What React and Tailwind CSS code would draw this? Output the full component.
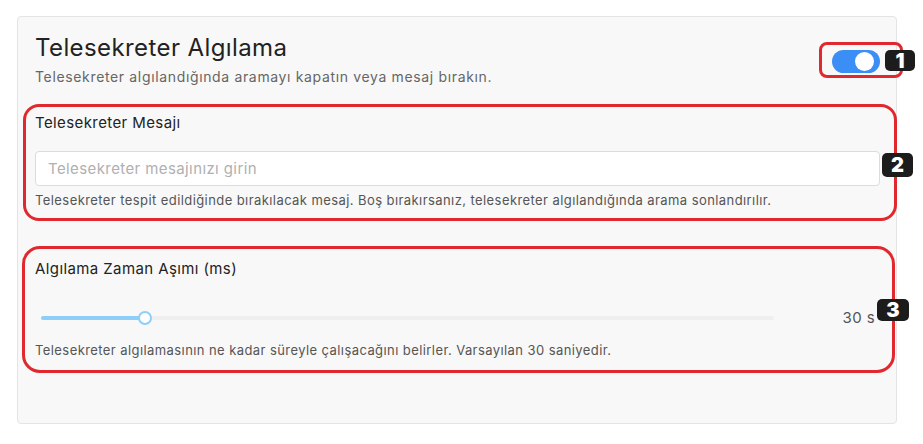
const font = { fontFamily: 'Inter, "Noto Sans", sans-serif' };

function Badge({ n, className }) {
  return (
    <div className={`absolute flex items-center justify-center rounded-[5px] bg-[#1c1c1c] text-white font-black text-[20px] leading-none ${className}`}>
      {n}
    </div>
  );
}

export default function App() {
  return (
    <div className="relative w-[923px] h-[444px] bg-white overflow-hidden pt-[16px] pl-[17px]" style={font}>
      <div className="w-[880px] h-[408px] rounded-[4px] border border-[#e4e4e4] bg-[#f8f8f8] pl-[17px] pr-[16px] pt-[16px]">
        {/* header */}
        <div className="flex items-start justify-between">
          <div>
            <h2 className="text-[24px] leading-[30px] tracking-[0.4px] text-[#222] font-normal">Telesekreter Algılama</h2>
            <p className="mt-[4px] text-[14px] leading-[20px] tracking-[0.65px] text-[#666]">
              Telesekreter algılandığında aramayı kapatın veya mesaj bırakın.
            </p>
          </div>
          <div className="mt-[17px] w-[48px] h-[23px] rounded-full bg-[#3a8ef6] flex items-center justify-end pr-[6px]">
            <div className="w-[19px] h-[19px] rounded-full bg-white"></div>
          </div>
        </div>

        {/* message */}
        <div className="mt-[26px] flex flex-col">
          <label className="text-[15px] leading-[20px] tracking-[0.4px] text-[#222]">Telesekreter Mesajı</label>
          <input
            className="mt-[18px] w-full h-[35px] rounded-[4px] border border-[#dcdcdc] bg-white px-[12px] text-[15px] tracking-[0.4px] placeholder-[#b0b0b0] outline-none"
            placeholder="Telesekreter mesajınızı girin"
          />
          <p className="mt-[5px] text-[13px] leading-[18px] tracking-[0.42px] text-[#555]">
            Telesekreter tespit edildiğinde bırakılacak mesaj. Boş bırakırsanız, telesekreter algılandığında arama sonlandırılır.
          </p>
        </div>

        {/* timeout */}
        <div className="mt-[50px] flex flex-col">
          <label className="text-[15px] leading-[20px] tracking-[0.4px] text-[#222]">Algılama Zaman Aşımı (ms)</label>
          <div className="mt-[28px] flex items-center h-[22px]">
            <div className="ml-[6px] w-[733px] h-[4px] rounded-full bg-[#efefef] relative">
              <div className="absolute left-0 top-0 h-[4px] w-[104px] rounded-full bg-[#8ecffa]"></div>
              <div className="absolute left-[97px] top-[-5px] w-[14px] h-[14px] rounded-full bg-white border-2 border-[#8ecffa]"></div>
            </div>
            <div className="flex-1 text-right pr-[5px] text-[15px] tracking-[0.4px] text-[#555]">30 s</div>
          </div>
          <p className="mt-[12px] text-[13px] leading-[18px] tracking-[0.42px] text-[#555]">
            Telesekreter algılamasının ne kadar süreyle çalışacağını belirler. Varsayılan 30 saniyedir.
          </p>
        </div>
      </div>

      {/* annotations */}
      <div className="absolute left-[819px] top-[42px] w-[84px] h-[36px] rounded-[8px] border-[3px] border-[#e0292f]"></div>
      <Badge n="1" className="left-[885px] top-[50px] w-[30px] h-[21px]" />
      <div className="absolute left-[23px] top-[104px] w-[874px] h-[117px] rounded-[16px] border-[3px] border-[#e0292f]"></div>
      <Badge n="2" className="left-[882px] top-[153px] w-[31px] h-[24px]" />
      <div className="absolute left-[22px] top-[246px] w-[873px] h-[127px] rounded-[18px] border-[3px] border-[#e0292f]"></div>
      <Badge n="3" className="left-[877px] top-[299px] w-[32px] h-[22px]" />
    </div>
  );
}
